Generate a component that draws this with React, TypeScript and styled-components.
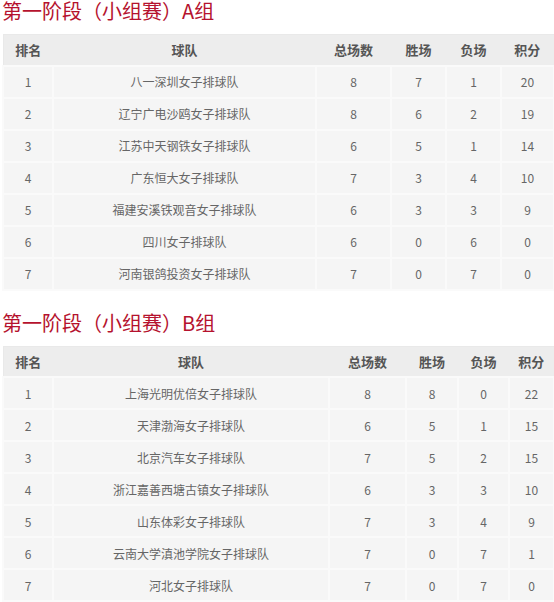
import React from "react";
import styled, { createGlobalStyle } from "styled-components";

const GlobalStyle = createGlobalStyle`
  html, body {
    margin: 0;
    padding: 0;
    background: #ffffff;
    font-family: "Noto Sans CJK SC", "Noto Sans", sans-serif;
  }
`;

type Row = [number, string, number, number, number, number];

const groupA: Row[] = [
  [1, "八一深圳女子排球队", 8, 7, 1, 20],
  [2, "辽宁广电沙鸥女子排球队", 8, 6, 2, 19],
  [3, "江苏中天钢铁女子排球队", 6, 5, 1, 14],
  [4, "广东恒大女子排球队", 7, 3, 4, 10],
  [5, "福建安溪铁观音女子排球队", 6, 3, 3, 9],
  [6, "四川女子排球队", 6, 0, 6, 0],
  [7, "河南银鸽投资女子排球队", 7, 0, 7, 0],
];

const groupB: Row[] = [
  [1, "上海光明优倍女子排球队", 8, 8, 0, 22],
  [2, "天津渤海女子排球队", 6, 5, 1, 15],
  [3, "北京汽车女子排球队", 7, 5, 2, 15],
  [4, "浙江嘉善西塘古镇女子排球队", 6, 3, 3, 10],
  [5, "山东体彩女子排球队", 7, 3, 4, 9],
  [6, "云南大学滇池学院女子排球队", 7, 0, 7, 1],
  [7, "河北女子排球队", 7, 0, 7, 0],
];

const Page = styled.div`
  width: 554px;
  padding: 0 1px 0 2px;
  box-sizing: border-box;
`;

const Section = styled.section<{ $top: number }>`
  margin-top: ${(p) => p.$top}px;
`;

const Title = styled.h2`
  margin: 0 0 12px;
  font-size: 20px;
  line-height: 22px;
  font-weight: normal;
  color: #b5122e;
`;

const Table = styled.table`
  width: 100%;
  border-collapse: collapse;
  table-layout: fixed;
  border: 1px solid #e9e9e9;
`;

const HeadRow = styled.tr`
  background: #ededed;
  height: 31px;
`;

const Th = styled.th`
  padding: 0;
  font-size: 13px;
  font-weight: bold;
  color: #555555;
  text-align: center;
`;

const BodyRow = styled.tr`
  height: 32px;
  background: #f5f5f5;
`;

const Td = styled.td`
  padding: 0;
  border: 2px solid #fafafa;
  font-size: 12px;
  color: #666666;
  text-align: center;
`;

const headers = ["排名", "球队", "总场数", "胜场", "负场", "积分"];

const Standings = ({ title, rows, cols, top }: { title: string; rows: Row[]; cols: number[]; top: number }) => (
  <Section $top={top}>
    <Title>{title}</Title>
    <Table>
      <colgroup>
        {cols.map((w, i) => (
          <col key={i} style={{ width: w }} />
        ))}
      </colgroup>
      <thead>
        <HeadRow>
          {headers.map((h) => (
            <Th key={h}>{h}</Th>
          ))}
        </HeadRow>
      </thead>
      <tbody>
        {rows.map((r) => (
          <BodyRow key={r[0]}>
            {r.map((c, i) => (
              <Td key={i}>{c}</Td>
            ))}
          </BodyRow>
        ))}
      </tbody>
    </Table>
  </Section>
);

export default function App() {
  return (
    <Page>
      <GlobalStyle />
      <Standings title="第一阶段（小组赛）A组" rows={groupA} cols={[50, 263, 75, 55, 55, 53]} top={0} />
      <Standings title="第一阶段（小组赛）B组" rows={groupB} cols={[50, 276, 77, 52, 51, 45]} top={21} />
    </Page>
  );
}
